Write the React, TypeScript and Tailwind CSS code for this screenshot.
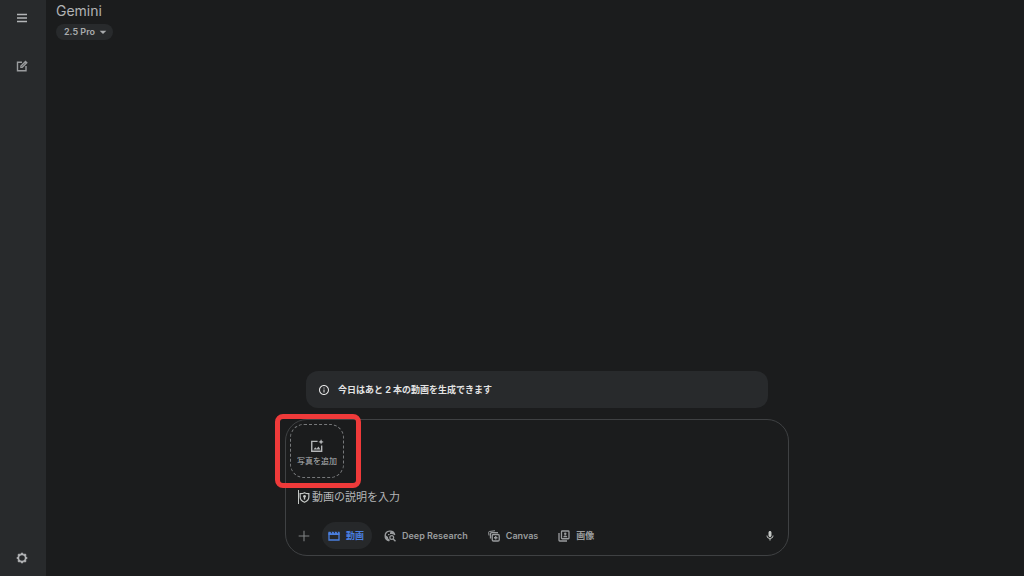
import { ReactNode } from "react";
import { MdArrowDropDown, MdInfoOutline, MdMic } from "react-icons/md";

type IconProps = { className?: string };

const Icon = ({ className, children }: IconProps & { children: ReactNode }) => (
  <svg viewBox="0 0 24 24" fill="none" stroke="currentColor" strokeWidth="2" className={className} aria-hidden="true">
    {children}
  </svg>
);

const MenuIcon = ({ className }: IconProps) => (
  <Icon className={className}>
    <path d="M2 5h20M2 12h20M2 19h20" strokeWidth="3.2" />
  </Icon>
);

const EditIcon = ({ className }: IconProps) => (
  <Icon className={className}>
    <path d="M12 4.5H3v17h17V12" strokeWidth="2.8" />
    <path d="M8.5 16v-4.5L19 1l4.5 4.5L13 16z" fill="currentColor" stroke="none" />
    <path d="m11 13.5 7-7" className="stroke-[#282a2c]" strokeWidth="1.2" />
  </Icon>
);

const PlusIcon = ({ className }: IconProps) => (
  <Icon className={className}>
    <path d="M12 4v16M4 12h16" strokeWidth="1.6" />
  </Icon>
);

const SettingsIcon = ({ className }: IconProps) => (
  <Icon className={className}>
    <path
      d="m12 1.5 3 3h4.500v4.500l3 3-3 3v4.500H15l-3 3-3-3H4.500V15l-3-3 3-3V4.500H9z"
      strokeWidth="1.8"
      strokeLinejoin="round"
      fill="currentColor"
    />
    <circle cx="12" cy="12" r="5.600" className="fill-[#282a2c]" stroke="none" />
  </Icon>
);

const AddPhotoIcon = ({ className }: IconProps) => (
  <Icon className={className}>
    <path d="M13 4H3v17h17V11" strokeWidth="2.4" />
    <path d="m6 18 3-4 2.4 2.8 3.1-3.8 3.5 5z" fill="currentColor" stroke="none" />
    <path d="m19 .5 1.400 3.100L23.500 5l-3.100 1.400L19 9.500l-1.400-3.100L14.500 5l3.100-1.400z" fill="currentColor" stroke="none" />
  </Icon>
);

const ShieldIcon = ({ className }: IconProps) => (
  <Icon className={className}>
    <path d="M2.500 3.500c4 .5 6.500-.5 9.500-2 3 1.500 5.500 2.500 9.500 2V11c0 6-4.500 9.500-9.500 11.500C7 20.500 2.500 17 2.500 11z" strokeWidth="2.6" />
    <circle cx="12" cy="9.5" r="3" fill="currentColor" stroke="none" />
    <path d="M12 10v6.5" strokeWidth="3" />
  </Icon>
);

const VideoIcon = ({ className }: IconProps) => (
  <Icon className={className}>
    <path d="M2 5v15h20V5" strokeWidth="2.6" />
    <path d="M1 3.500h4l1.500 3h2L7 3.500h4l1.500 3h2l-1.500-3h4l1.500 3h2l-1.500-3h4V10H1z" fill="currentColor" stroke="none" />
  </Icon>
);

const ResearchIcon = ({ className }: IconProps) => (
  <Icon className={className}>
    <path d="M10.5 21.5A9.700 9.700 0 1 1 21.500 10" strokeWidth="2.6" />
    <path
      d="M2 9.500 8 14v3l3 1.500V22C5 21 1.500 15.500 2 9.500zM8 11V8h4V5.500L14.500 2c3.500 1.500 6 4 7 8-5.500-3.500-10.500-2.500-13.500 1z"
      fill="currentColor"
      stroke="none"
    />
    <circle cx="15.5" cy="15" r="3.8" strokeWidth="2.4" />
    <path d="m18.300 17.800 4.700 4.700" strokeWidth="2.8" />
  </Icon>
);

const CanvasIcon = ({ className }: IconProps) => (
  <Icon className={className}>
    <rect x="8.5" y="9" width="14" height="13" rx="2.5" strokeWidth="2.6" />
    <path d="M5 17V7.500c0-1.500.8-2.300 2.300-2.300H20" strokeWidth="2.6" />
    <path d="M2 11 1.300 4.800c-.1-1 .3-1.600 1.300-1.800L14 1.500" />
    <path d="M15.500 12v7M12 15.500h7" strokeWidth="2.6" />
  </Icon>
);

const ImagesIcon = ({ className }: IconProps) => (
  <Icon className={className}>
    <rect x="7" y="2" width="15" height="15.5" rx="1.5" strokeWidth="2.6" />
    <path d="M2 6v14.500c0 .9.600 1.500 1.500 1.500H18" strokeWidth="2.6" />
    <path d="M10.500 14.500c0-4.500 8-4.500 8 0z" fill="currentColor" stroke="none" />
    <circle cx="14.5" cy="7.5" r="2.5" fill="currentColor" stroke="none" />
  </Icon>
);

const tools = [
  { label: "動画", icon: VideoIcon, active: true },
  { label: "Deep Research", icon: ResearchIcon, active: false },
  { label: "Canvas", icon: CanvasIcon, active: false },
  { label: "画像", icon: ImagesIcon, active: false },
];

const Sidebar = () => (
  <nav className="flex w-[46px] shrink-0 flex-col items-center bg-[#282a2c] py-3 pr-0.5 text-[#9a9c9e]">
    <button aria-label="メニュー" className="text-[#b4b6b8]">
      <MenuIcon className="size-3" />
    </button>
    <button aria-label="チャットを新規作成" className="mt-9">
      <EditIcon className="size-3" />
    </button>
    <button aria-label="設定" className="mt-auto text-[#b4b6b8]">
      <SettingsIcon className="size-3" />
    </button>
  </nav>
);

const Header = () => (
  <header className="flex flex-col items-start gap-1.5 px-2.5 pt-1">
    <h1 className="text-sm/[14px] text-[#b0b2b4]">Gemini</h1>
    <button className="flex h-4 items-center rounded-full bg-[#282a2c] pr-0.5 pl-2 text-[9px] font-semibold text-[#a9abad]">
      2.5 Pro
      <MdArrowDropDown className="size-4" />
    </button>
  </header>
);

const Notice = () => (
  <div className="mx-[21px] flex h-[37px] items-center gap-2 rounded-[12px] bg-[#282a2c] px-3 text-[#e3e3e3]">
    <MdInfoOutline className="size-3" />
    <p className="text-[9px] font-bold">今日はあと 2 本の動画を生成できます</p>
  </div>
);

const PromptBox = () => (
  <form className="mt-[11px] flex flex-col rounded-[22px] border border-[#3f4143] px-1 pt-1 pb-1.5">
    <div className="relative self-start">
      <button
        type="button"
        className="flex size-[54px] flex-col items-center justify-center gap-0.5 rounded-[14px] border border-dashed border-[#77797b] pt-1 text-[8px] text-[#b4b6b8]"
      >
        <AddPhotoIcon className="size-3.5" />
        写真を追加
      </button>
      <div className="pointer-events-none absolute -top-[10px] -left-[15px] h-[74px] w-[86px] rounded-[8px] border-5 border-[#ef3a3a]" />
    </div>
    <label className="mt-[11px] flex h-4 items-center pl-2 text-[#c4c7c5]">
      <span className="h-3.5 w-px bg-[#c4c7c5]" />
      <ShieldIcon className="mr-0.5 size-[11px]" />
      <input
        aria-label="プロンプト"
        placeholder="動画の説明を入力"
        className="min-w-0 flex-1 bg-transparent text-[11px] outline-none placeholder:text-[#b4b6b8]"
      />
    </label>
    <div className="mt-[17px] flex h-[27px] items-center pr-2 pl-1.5 text-[#9a9c9e]">
      <button type="button" aria-label="追加" className="mr-2.5 text-[#808284]">
        <PlusIcon className="size-4" />
      </button>
      {tools.map(({ label, icon: ToolIcon, active }) => (
        <button
          key={label}
          type="button"
          aria-pressed={active}
          className={
            active
              ? "mr-1.5 flex h-[27px] items-center gap-1.5 rounded-full bg-[#26282a] pr-2 pl-1.5 text-[9px] font-bold text-[#4a7fe0]"
              : "mr-1.5 flex h-[27px] items-center gap-1.5 rounded-full pr-2 pl-1.5 text-[9px] font-semibold"
          }
        >
          <ToolIcon className="size-3" />
          {label}
        </button>
      ))}
      <button type="button" aria-label="マイク" className="ml-auto text-[#c4c7c5]">
        <MdMic className="size-3" />
      </button>
    </div>
  </form>
);

const App = () => {
  return (
    <div className="flex min-h-screen bg-[#1b1c1d] font-['Inter','Noto_Sans_CJK_JP',sans-serif]">
      <Sidebar />
      <div className="flex min-w-0 flex-1 flex-col">
        <Header />
        <main className="mt-auto flex justify-center pb-5 pl-1">
          <div className="w-full max-w-[504px]">
            <Notice />
            <PromptBox />
          </div>
        </main>
      </div>
    </div>
  );
};

export default App;
